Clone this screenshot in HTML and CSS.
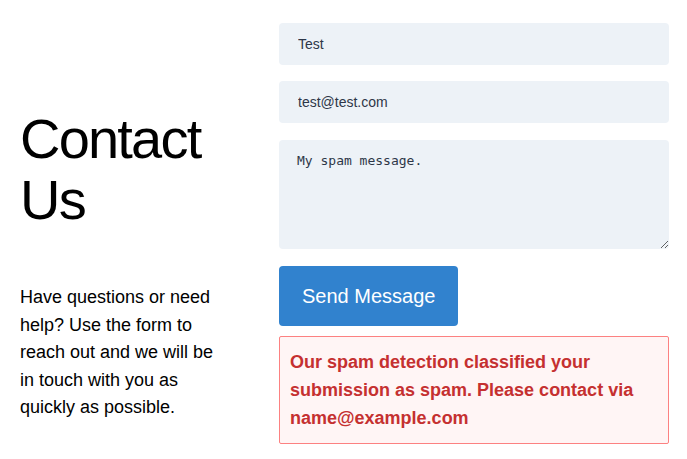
FILE: index.html
```html
<!DOCTYPE html>
<html lang="en">
<head>
<meta charset="utf-8">
<title>Contact Us</title>
<link rel="stylesheet" href="styles.css">
</head>
<body>
<div class="page">
  <section class="intro">
    <h1 class="title">Contact Us</h1>
    <p class="lead">Have questions or need help? Use the form to reach out and we will be in touch with you as quickly as possible.</p>
  </section>
  <form class="form">
    <input class="field" type="text" value="Test">
    <input class="field field-email" type="email" value="test@test.com">
    <textarea class="field area">My spam message.</textarea>
    <div class="actions"><button class="btn" type="button">Send Message</button></div>
    <div class="alert">Our spam detection classified your submission as spam. Please contact via name@example.com</div>
  </form>
</div>
</body>
</html>
```
FILE: styles.css
```css
html, body {
  margin: 0;
  padding: 0;
  background: #ffffff;
}
body {
  font-family: "Liberation Sans", Arial, sans-serif;
  color: #000000;
}
.page {
  display: grid;
  grid-template-columns: 1fr 390px;
  column-gap: 20px;
  padding: 23px 18px 0 20px;
}
.intro {
  padding-top: 85px;
}
.title {
  margin: 0;
  font-size: 56px;
  line-height: 61px;
  font-weight: 400;
  letter-spacing: -1.8px;
}
.lead {
  margin: 54px 0 0;
  font-size: 18px;
  line-height: 27.5px;
  padding-right: 32px;
}
.form {
  display: flex;
  flex-direction: column;
}
.field {
  display: block;
  box-sizing: border-box;
  width: 100%;
  height: 42px;
  border: 0;
  border-radius: 4px;
  background: #edf2f7;
  color: #2d3748;
  font-family: "Liberation Sans", Arial, sans-serif;
  font-size: 14px;
  padding: 0 19px;
  margin: 0 0 16px;
  outline: none;
}
.field-email {
  margin-bottom: 17px;
}
.area {
  height: 109px;
  padding: 12px 18px;
  font-family: "DejaVu Sans Mono", "Liberation Mono", monospace;
  font-size: 13px;
  line-height: 18px;
  color: #2d3748;
  margin-bottom: 17px;
  resize: vertical;
}
.actions {
  display: flex;
}
.btn {
  height: 60px;
  padding: 0 23px;
  border: 0;
  border-radius: 4px;
  background: #3182ce;
  color: #ffffff;
  font-family: "Liberation Sans", Arial, sans-serif;
  font-size: 20px;
  line-height: 28px;
}
.alert {
  margin-top: 10px;
  box-sizing: border-box;
  border: 1px solid #fc8181;
  border-radius: 2px;
  background: #fff5f5;
  color: #c53030;
  font-weight: 700;
  font-size: 18px;
  line-height: 28px;
  padding: 11px 10px;
}
```
